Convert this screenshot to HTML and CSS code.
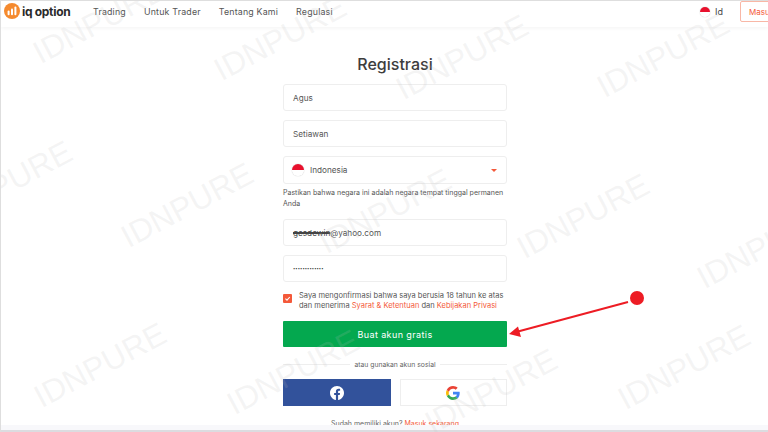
FILE: index.html
```html
<!DOCTYPE html>
<html lang="id">
<head>
    <meta charset="UTF-8">
    <meta name="viewport" content="width=device-width, initial-scale=1.0">
    <title>Registrasi</title>
    <link rel="stylesheet" href="styles.css">
</head>
<body>
<header class="topbar">
    <div class="logo">
        <svg class="logo-icon" viewBox="0 0 16 16">
            <circle cx="8" cy="8" r="8" fill="#f58a2e"/>
            <rect x="3.600" y="7.600" width="2" height="4.600" rx="1" fill="#fff"/>
            <rect x="7" y="5.600" width="2" height="6.600" rx="1" fill="#fff"/>
            <rect x="10.400" y="3.400" width="2" height="8.800" rx="1" fill="#fff"/>
        </svg>
        <span class="logo-text">iq option</span>
    </div>
    <nav class="nav">
        <a>Trading</a>
        <a>Untuk Trader</a>
        <a>Tentang Kami</a>
        <a>Regulasi</a>
    </nav>
    <div class="lang">
        <span class="flag flag-small"></span>
        <span>Id</span>
    </div>
    <a class="login">Masuk</a>
</header>

<main class="page">
    <form class="form">
        <h1>Registrasi</h1>
        <div class="field">Agus</div>
        <div class="field">Setiawan</div>
        <div class="field field-country">
            <span class="flag"></span>
            <span class="country-name">Indonesia</span>
            <span class="caret"></span>
        </div>
        <p class="note">Pastikan bahwa negara ini adalah negara tempat tinggal permanen Anda</p>
        <div class="field"><span class="redacted">gesdewin</span>@yahoo.com</div>
        <div class="field field-pass">•••••••••••••</div>
        <div class="agree">
            <span class="checkbox">
                <svg viewBox="0 0 9 9"><path d="M2.400 4.600 4 6.100 6.800 3" fill="none" stroke="#fff" stroke-width="1.100"/></svg>
            </span>
            <p>Saya mengonfirmasi bahwa saya berusia 18 tahun ke atas dan menerima <a>Syarat &amp; Ketentuan</a> dan <a>Kebijakan Privasi</a></p>
        </div>
        <button type="button" class="submit">Buat akun gratis</button>
        <div class="divider"><span>atau gunakan akun sosial</span></div>
        <div class="social">
            <div class="social-btn social-fb">
                <svg viewBox="0 0 24 24" class="social-icon">
                    <path fill="#fff" d="M24 12.070C24 5.400 18.630 0 12 0S0 5.400 0 12.070c0 6.030 4.390 11.020 10.130 11.930v-8.440H7.080v-3.490h3.050V9.410c0-3.020 1.790-4.690 4.530-4.690 1.310 0 2.680.24 2.680.24v2.970h-1.510c-1.490 0-1.960.93-1.960 1.880v2.260h3.330l-.53 3.490h-2.800V24C19.610 23.090 24 18.100 24 12.070z"/>
                </svg>
            </div>
            <div class="social-btn">
                <svg viewBox="0 0 24 24" class="social-icon">
                    <path fill="#4285f4" d="M23.500 12.300c0-.9-.1-1.600-.2-2.300H12v4.500h6.500c-.1 1.100-.8 2.800-2.400 3.900l3.700 2.900c2.200-2.100 3.700-5.100 3.700-9z"/>
                    <path fill="#34a853" d="M12 24c3.200 0 6-1.100 7.900-2.900l-3.700-2.900c-1 .7-2.400 1.200-4.200 1.200-3.200 0-5.900-2.100-6.900-5.100L1.300 17.200C3.300 21.200 7.300 24 12 24z"/>
                    <path fill="#fbbc05" d="M5.100 14.300c-.3-.8-.4-1.500-.4-2.300s.2-1.600.4-2.300L1.300 6.800C.5 8.400 0 10.100 0 12s.5 3.600 1.300 5.200l3.800-2.900z"/>
                    <path fill="#ea4335" d="M12 4.600c2.300 0 3.800 1 4.600 1.800l3.400-3.300C18 1.200 15.200 0 12 0 7.300 0 3.300 2.800 1.300 6.800l3.800 2.900C6.100 6.700 8.800 4.600 12 4.600z"/>
                </svg>
            </div>
        </div>
        <p class="have-account">Sudah memiliki akun? <a>Masuk sekarang</a></p>
    </form>
</main>

<div class="page-bottom"></div>

<svg class="annotation" viewBox="0 0 768 432">
    <circle cx="637" cy="298" r="7" fill="#ed1c24"/>
    <line x1="628" y1="302" x2="518" y2="331.500" stroke="#ed1c24" stroke-width="2"/>
    <polygon points="509,334 518,326.500 521,337" fill="#ed1c24"/>
</svg>

<div class="watermarks">
    <span class="mark m1">IDNPURE</span>
    <span class="mark m2">IDNPURE</span>
    <span class="mark m3">IDNPURE</span>
    <span class="mark m4">IDNPURE</span>
    <span class="mark m5">IDNPURE</span>
    <span class="mark m6">IDNPURE</span>
    <span class="mark m7">IDNPURE</span>
    <span class="mark m8">IDNPURE</span>
    <span class="mark m9">IDNPURE</span>
    <span class="mark m10">IDNPURE</span>
    <span class="mark m11">IDNPURE</span>
    <span class="mark m12">IDNPURE</span>
    <span class="mark m13">IDNPURE</span>
</div>
</body>
</html>
```

FILE: styles.css
```css
* {
    box-sizing: border-box;
}

html, body {
    margin: 0;
    padding: 0;
}

body {
    position: relative;
    width: 768px;
    height: 432px;
    overflow: hidden;
    background-color: #fff;
    border-top: 1px solid #dedede;
    border-left: 1px solid #dedede;
    font-family: Inter, "Open Sans", sans-serif;
    color: #444;
}

/* top bar */
.topbar {
    display: flex;
    align-items: flex-start;
    height: 26px;
    padding: 2px 0 0 3px;
    background-color: #fff;
    box-shadow: 0 1px 4px rgba(0, 0, 0, 0.05);
}

.logo {
    display: flex;
    align-items: center;
    gap: 2px;
    width: 89px;
}

.logo-icon {
    width: 16px;
    height: 16px;
}

.logo-text {
    font-size: 12px;
    font-weight: 700;
    letter-spacing: -0.3px;
    color: #2a2a2a;
}

.nav {
    display: flex;
    gap: 18px;
    margin-top: 3px;
    font-size: 8.800px;
    letter-spacing: 0.2px;
    color: #555;
}

.lang {
    display: flex;
    align-items: center;
    gap: 5px;
    margin-top: 3px;
    margin-left: auto;
    margin-right: 17px;
    font-size: 9px;
    color: #444;
}

.login {
    flex: none;
    width: 45px;
    height: 21px;
    margin-right: -17px;
    margin-top: -2px;
    padding: 5px 0 0 8px;
    font-size: 8px;
    color: #f4593a;
    border: 1px solid #f8b7a6;
    border-radius: 2px;
}

.flag {
    display: inline-block;
    flex: none;
    width: 12px;
    height: 12px;
    border-radius: 50%;
    background: linear-gradient(#e8112d 50%, #fff 50%);
    box-shadow: 0 0 1px rgba(0, 0, 0, 0.4);
}

.flag-small {
    width: 10px;
    height: 10px;
}

/* form */
.page {
    display: flex;
    justify-content: center;
    padding-left: 21px;
}

.form {
    width: 224px;
}

h1 {
    margin: 26px 0 9px;
    font-size: 16px;
    line-height: 22px;
    font-weight: 500;
    text-align: center;
    color: #3d3d3d;
}

.field {
    display: flex;
    align-items: center;
    height: 27px;
    margin-bottom: 9px;
    padding-left: 9px;
    font-size: 8.200px;
    color: #555;
    border: 1px solid #eeeeee;
    border-radius: 3px;
}

.field-country {
    height: 28px;
    margin-bottom: 0;
    padding-right: 9px;
}

.field-country .flag {
    margin-left: -1px;
}

.country-name {
    margin-left: 6px;
}

.caret {
    width: 0;
    height: 0;
    margin-left: auto;
    border-left: 3px solid transparent;
    border-right: 3px solid transparent;
    border-top: 3px solid #f4593a;
}

.redacted {
    color: #444;
    text-decoration: line-through;
    text-decoration-thickness: 2px;
}

.field-pass {
    font-size: 4px;
    letter-spacing: 0.1px;
    color: #333;
}

.note {
    margin: 3px 0 10px;
    font-size: 7px;
    line-height: 11px;
    color: #555;
}

.agree {
    display: flex;
    gap: 7px;
    margin-top: 8px;
}

.checkbox {
    flex: none;
    width: 9px;
    height: 9px;
    margin-top: 3px;
    background-color: #f4593a;
    border-radius: 1px;
}

.checkbox svg {
    display: block;
}

.agree p {
    margin: 0;
    font-size: 7.500px;
    line-height: 10px;
    color: #555;
}

.agree a, .have-account a {
    color: #f4593a;
}

.submit {
    display: block;
    width: 100%;
    height: 26px;
    margin-top: 10px;
    padding: 0;
    border: none;
    border-radius: 1px;
    background-color: #04a84f;
    color: #fff;
    font-family: inherit;
    font-size: 9px;
    font-weight: 400;
    letter-spacing: 0.4px;
}

.divider {
    display: flex;
    align-items: center;
    gap: 4px;
    height: 10px;
    margin: 12px 0 10px;
    font-size: 6.800px;
    color: #666;
}

.divider::before, .divider::after {
    content: "";
    flex: 1;
    height: 1px;
    background-color: #eeeeee;
}

.social {
    display: flex;
    gap: 9px;
}

.social-btn {
    display: flex;
    flex: 1;
    align-items: center;
    justify-content: center;
    height: 27px;
    border: 1px solid #eeeeee;
}

.social-fb {
    background-color: #32529b;
    border-color: #32529b;
}

.social-icon {
    width: 14px;
    height: 14px;
}

.have-account {
    margin: 13px 0 0;
    font-size: 7px;
    text-align: center;
    color: #666;
}

/* screenshot frame at the bottom */
.page-bottom {
    position: absolute;
    left: 0;
    right: 0;
    top: 424px;
    height: 7px;
    background-color: #f8f8fb;
    border-bottom: 2px solid #dcdce0;
}

/* red arrow drawn over the page */
.annotation {
    position: absolute;
    left: -1px;
    top: -1px;
    width: 768px;
    height: 432px;
}

/* watermark */
.watermarks {
    position: absolute;
    inset: 0;
    pointer-events: none;
}

.mark {
    position: absolute;
    font-family: "Liberation Sans", Arial, sans-serif;
    font-size: 32px;
    line-height: 32px;
    color: rgba(190, 190, 190, 0.16);
    white-space: nowrap;
    transform: translate(-50%, -50%) rotate(-28deg);
}

.m1 { left: 98px; top: 20px; }
.m2 { left: 279px; top: 37px; }
.m3 { left: 461px; top: 56px; }
.m4 { left: 662px; top: 54px; }
.m5 { left: 5px; top: 182px; }
.m6 { left: 186px; top: 204px; }
.m7 { left: 384px; top: 210px; }
.m8 { left: 582px; top: 215px; }
.m9 { left: 762px; top: 245px; }
.m10 { left: 99px; top: 364px; }
.m11 { left: 292px; top: 371px; }
.m12 { left: 490px; top: 390px; }
.m13 { left: 683px; top: 366px; }
```
